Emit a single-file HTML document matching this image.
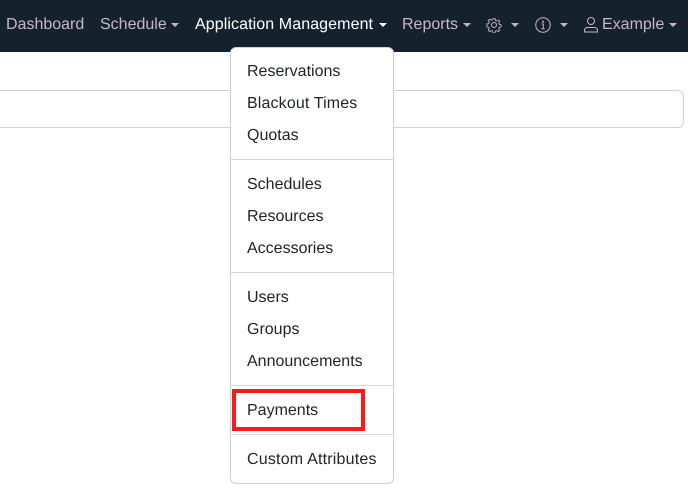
<!DOCTYPE html>
<html>
<head>
<meta charset="utf-8">
<style>
html,body{margin:0;padding:0;width:688px;height:497px;overflow:hidden;background:#fff;font-family:"Liberation Sans",sans-serif;font-size:16px;text-rendering:geometricPrecision;}
.abs{position:absolute;}
#nav{left:0;top:0;width:688px;height:52px;background:#15222e;}
.n{position:absolute;top:15px;line-height:19px;color:#c6b4cb;white-space:nowrap;}
.c{position:absolute;top:23px;width:0;height:0;border-top:4px solid #c6b4cb;border-left:4px solid transparent;border-right:4px solid transparent;}
#card{left:-10px;top:90px;width:692px;height:36px;border:1px solid #ced2d8;border-radius:6px;background:#fff;}
#dd{left:230px;top:47px;width:162px;height:435px;background:#fff;border:1px solid #d0d0d0;border-radius:6px;}
.i{position:absolute;left:247px;line-height:19px;color:#212529;white-space:nowrap;}
.d{position:absolute;left:231px;width:162px;height:1px;background:#d6d8da;}
#red{left:232px;top:389px;width:125px;height:34px;border:4px solid #fb1a1a;}
svg{position:absolute;fill:none;stroke:#c6b4cb;}
</style>
</head>
<body>
<div class="abs" id="nav"></div>
<span class="n" style="left:6px">Dashboard</span>
<span class="n" style="left:100px">Schedule</span><i class="c" style="left:170.500px"></i>
<span class="n" style="left:195px;color:#fff;letter-spacing:.09px">Application Management</span><i class="c" style="left:378.500px;border-top-color:#fff"></i>
<span class="n" style="left:402px">Reports</span><i class="c" style="left:462.500px"></i>
<svg style="left:486px;top:17px" width="16" height="16" viewBox="0 0 16 16" stroke-width="1"><circle cx="8" cy="8" r="2.500"/><path d="M6.800 1h2.400l.4 2 1.400.6 1.800-1.100 1.600 1.600-1.100 1.800.6 1.400 2 .4v2.400l-2 .4-.6 1.400 1.100 1.800-1.600 1.600-1.800-1.100-1.400.6-.4 2H6.800l-.4-2-1.400-.6-1.800 1.100-1.600-1.600 1.100-1.800-.6-1.400-2-.4V6.800l2-.4.6-1.400-1.100-1.800 1.600-1.600 1.800 1.100 1.400-.6z" transform="translate(.8 .8) scale(.9)"/></svg>
<i class="c" style="left:511px"></i>
<svg style="left:535px;top:17px" width="16" height="16" viewBox="0 0 16 16" stroke-width="1"><circle cx="8" cy="8" r="7.250"/><path d="M6.500 7h1.800v4.800M6.300 11.800h3.400"/><circle cx="8" cy="4.700" r=".5" fill="#c6b4cb"/></svg>
<i class="c" style="left:560px"></i>
<svg style="left:583px;top:16px" width="16" height="17" viewBox="0 0 16 17" stroke-width="1"><circle cx="8" cy="5" r="3.500"/><path d="M1.500 16v-1.500c0-2 1.500-3 3.500-3h6c2 0 3.500 1 3.500 3V16z"/></svg>
<span class="n" style="left:602px">Example</span><i class="c" style="left:668.500px"></i>

<div class="abs" id="card"></div>
<div class="abs" id="dd"></div>
<span class="i" style="top:62px">Reservations</span>
<span class="i" style="top:94px;letter-spacing:.14px">Blackout Times</span>
<span class="i" style="top:126px">Quotas</span>
<div class="d" style="top:159px"></div>
<span class="i" style="top:175px">Schedules</span>
<span class="i" style="top:207px">Resources</span>
<span class="i" style="top:239px">Accessories</span>
<div class="d" style="top:272px"></div>
<span class="i" style="top:288px">Users</span>
<span class="i" style="top:320px">Groups</span>
<span class="i" style="top:352px">Announcements</span>
<div class="d" style="top:385px"></div>
<span class="i" style="top:401px">Payments</span>
<div class="d" style="top:434px"></div>
<span class="i" style="top:450px;letter-spacing:.2px">Custom Attributes</span>
<div class="abs" id="red"></div>
</body>
</html>
